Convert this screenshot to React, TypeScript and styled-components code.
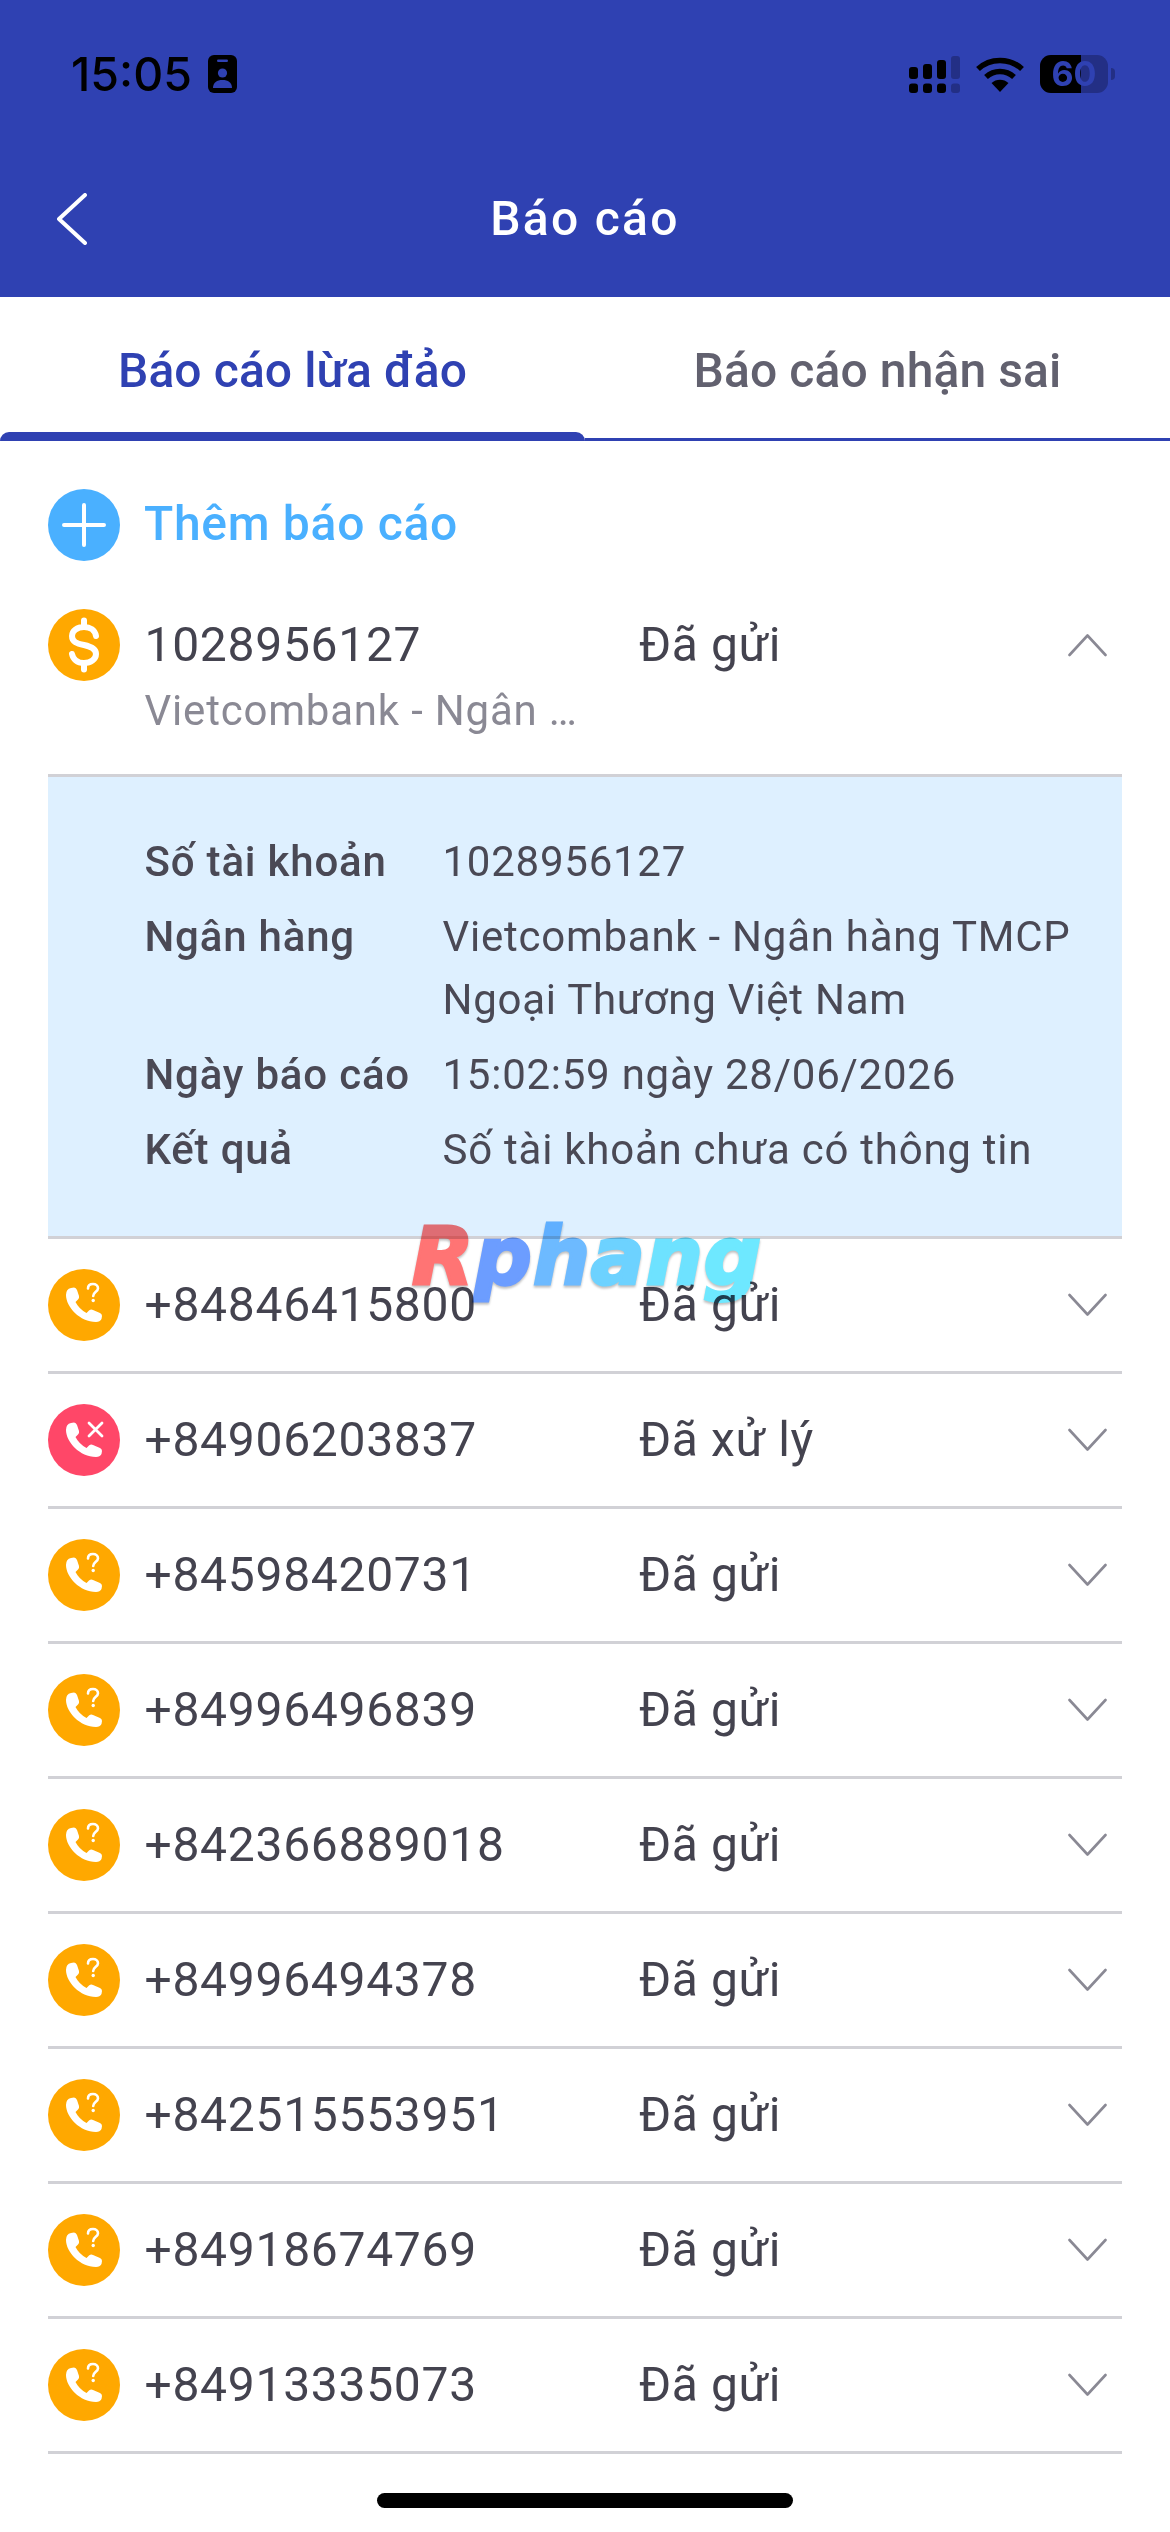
import React from "react";
import styled, { createGlobalStyle } from "styled-components";

const Global = createGlobalStyle`
  html, body { margin: 0; padding: 0; background: #fff; }
  body { font-family: Roboto, "Noto Sans", sans-serif; }
  * { box-sizing: border-box; }
`;

const Page = styled.div`
  position: relative;
  width: 1170px;
  height: 2532px;
  overflow: hidden;
  background: #fff;
  display: flex;
  flex-direction: column;
`;

const Header = styled.header`
  height: 297px;
  background: #2f41b2;
  display: flex;
  flex-direction: column;
`;

const StatusBar = styled.div`
  height: 141px;
  padding: 55px 55px 0 71px;
  display: flex;
  align-items: flex-start;
  justify-content: space-between;
`;

const StatusLeft = styled.div`
  display: flex;
  align-items: center;
  gap: 16px;
  height: 38px;
`;

const Time = styled.span`
  font-family: Inter, sans-serif;
  font-size: 46.5px;
  font-weight: 500;
  color: #000;
  line-height: 38px;
`;

const StatusRight = styled.div`
  display: flex;
  align-items: center;
  gap: 16px;
  height: 38px;
`;

const Battery = styled.div`
  position: relative;
  width: 68px;
  height: 38px;
  border-radius: 11px;
  background: #232f85;
  display: flex;
  align-items: center;
  justify-content: center;
`;

const BatteryFill = styled.div`
  position: absolute;
  left: 0;
  top: 0;
  bottom: 0;
  background: #000;
  border-radius: 11px 0 0 11px;
`;

const BatteryText = styled.span`
  position: relative;
  font-family: Inter, sans-serif;
  font-size: 34px;
  font-weight: 700;
  color: #2f41b2;
  line-height: 38px;
`;

const BatteryTip = styled.div`
  width: 4px;
  height: 12px;
  margin-left: -13px;
  background: #232f85;
  border-radius: 0 4px 4px 0;
`;

const NavBar = styled.div`
  flex: 1;
  padding: 0 57px 0;
  display: grid;
  grid-template-columns: 30px 1fr 30px;
  align-items: center;
`;

const Title = styled.h1`
  margin: 0;
  text-align: center;
  font-size: 48px;
  font-weight: 500;
  color: #fff;
  line-height: 60px;
  letter-spacing: 2.3px;
`;

const Tabs = styled.nav`
  display: grid;
  grid-template-columns: 1fr 1fr;
  height: 144px;
`;

const Tab = styled.div`
  display: flex;
  flex-direction: column;
  justify-content: flex-end;
`;

const TabLabel = styled.div<{ $active: boolean }>`
  height: ${(p) => (p.$active ? 135 : 141)}px;
  padding-top: ${(p) => (p.$active ? 12 : 6)}px;
  flex: none;
  display: flex;
  align-items: center;
  justify-content: center;
  font-size: 48px;
  font-weight: 500;
  letter-spacing: 0.1px;
  color: ${(p) => (p.$active ? "#2f41b2" : "#62616f")};
`;

const TabLine = styled.div<{ $active: boolean }>`
  height: ${(p) => (p.$active ? 9 : 3)}px;
  background: #2f41b2;
  border-radius: ${(p) => (p.$active ? "9px 9px 0 0" : "0")};
`;

const Content = styled.main`
  padding: 48px 48px 0;
  display: flex;
  flex-direction: column;
`;

const AddRow = styled.div`
  display: flex;
  align-items: center;
  gap: 24px;
  height: 72px;
  margin-bottom: 48px;
  font-size: 48px;
  font-weight: 500;
  color: #4ab0ff;
  letter-spacing: 0.7px;
`;

const AddLabel = styled.span`
  position: relative;
  top: -2px;
`;

const Row = styled.div<{ $tall?: boolean }>`
  display: grid;
  grid-template-columns: 72px 470px 1fr 39px;
  column-gap: 24.5px;
  align-items: ${(p) => (p.$tall ? "start" : "center")};
  height: ${(p) => (p.$tall ? 168 : 135)}px;
  border-bottom: 3px solid #d1d1d6;
  padding-right: 15px;
`;

const ChevronCell = styled.div<{ $pad?: boolean }>`
  min-width: 0;
  height: ${(p) => (p.$pad ? "72px" : "auto")};
  display: flex;
  align-items: center;
`;

const NumberCol = styled.div`
  min-width: 0;
  padding-top: 2px;
`;

const Primary = styled.div`
  font-size: 48px;
  line-height: 68px;
  color: #44434f;
  letter-spacing: 0.7px;
  white-space: nowrap;
`;

const Secondary = styled.div`
  font-size: 42px;
  line-height: 62px;
  margin-top: 1px;
  color: #8a8994;
  letter-spacing: 0.8px;
  white-space: nowrap;
`;

const Status = styled.div<{ $tall?: boolean }>`
  font-size: 48px;
  line-height: 68px;
  padding-top: ${(p) => (p.$tall ? 2 : 0)}px;
  color: #44434f;
  letter-spacing: 0.6px;
  white-space: nowrap;
`;

const Panel = styled.section`
  background: #def0ff;
  border-bottom: 3px solid #d1d1d6;
  height: 462px;
  padding: 53px 40px 0 96.5px;
  display: grid;
  grid-template-columns: 298px 1fr;
  grid-auto-rows: min-content;
  row-gap: 12px;
`;

const DetailLabel = styled.div`
  font-size: 42px;
  line-height: 63px;
  font-weight: 500;
  letter-spacing: 0.8px;
  color: #4a4955;
`;

const DetailValue = styled.div`
  font-size: 42px;
  line-height: 63px;
  color: #4a4955;
  letter-spacing: 0.75px;
`;

const HomeBar = styled.div`
  width: 416px;
  height: 15px;
  margin: 39px auto 0;
  border-radius: 8px;
  background: #000;
`;

const Watermark = styled.div`
  position: absolute;
  left: 412px;
  top: 1207px;
  font-family: "DejaVu Sans", sans-serif;
  font-size: 80px;
  font-weight: 700;
  font-style: italic;
  line-height: 100px;
  letter-spacing: 1px;
  white-space: nowrap;
  -webkit-text-stroke: 3px currentColor;
  mix-blend-mode: multiply;
  filter: drop-shadow(0 2px 1px rgba(0, 0, 0, 0.25));
`;

const WatermarkLetter = styled.span<{ $color: string }>`
  color: ${(p) => p.$color};
`;

const Dollar = () => (
  <svg width="72" height="72" viewBox="0 0 72 72">
    <circle cx="36" cy="36" r="36" fill="#ffa800" />
    <path
      d="M48 27C47 21 42 18 36 18C29 18 24 22 24 27C24 33 29 34.5 36 36C43 37.5 48 39.5 48 45C48 50 43 54 36 54C29 54 25 50 24 45M36 11.5V18M36 54V60.5"
      fill="none"
      stroke="#fff"
      strokeWidth="6"
      strokeLinecap="round"
    />
  </svg>
);

const Handset = () => (
  <path
    d="M23 19L26 18.5Q28 18.5 29 21L31 27Q31.5 29 30 30.5L27.5 33Q31 40 38.5 44L41 41.5Q43 40 45 41L52 44Q54 45 54 47L53.5 50Q52 53 48 53C32 53 18 38 18 26Q18 20 23 19Z"
    fill="#fff"
  />
);

const PhoneIcon = ({ rejected }: { rejected?: boolean }) => (
  <svg width="72" height="72" viewBox="0 0 72 72">
    <circle cx="36" cy="36" r="36" fill={rejected ? "#ff4768" : "#ffa800"} />
    <Handset />
    {rejected ? (
      <path d="M41 19L54 32M54 19L41 32" stroke="#fff" strokeWidth="2.8" strokeLinecap="round" />
    ) : (
      <>
        <path d="M40 19.5C40 16.5 42.3 15 45 15C47.8 15 50 16.7 50 19.3C50 22.8 45.2 22.8 45.2 27" fill="none" stroke="#fff" strokeWidth="2.6" strokeLinecap="round" />
        <circle cx="45.2" cy="31.5" r="1.7" fill="#fff" />
      </>
    )}
  </svg>
);

const PlusIcon = () => (
  <svg width="72" height="72" viewBox="0 0 72 72">
    <circle cx="36" cy="36" r="36" fill="#4ab0ff" />
    <path d="M16 36H56M36 16V56" stroke="#fff" strokeWidth="4" strokeLinecap="round" />
  </svg>
);

const Chevron = ({ up }: { up?: boolean }) => (
  <svg width="39" height="24" viewBox="0 0 39 24">
    <path d={up ? "M1.5 22L19.5 2.5L37.5 22" : "M1.5 2L19.5 21.5L37.5 2"} fill="none" stroke="#8a8994" strokeWidth="2.6" strokeLinecap="round" strokeLinejoin="round" />
  </svg>
);

const BackIcon = () => (
  <svg width="30" height="52" viewBox="0 0 30 52">
    <path d="M28 2L2 26L28 50" fill="none" stroke="#fff" strokeWidth="4" strokeLinecap="round" strokeLinejoin="round" />
  </svg>
);

const BadgeIcon = () => (
  <svg width="29" height="38" viewBox="0 0 29 38">
    <rect width="29" height="38" rx="6" fill="#000" />
    <rect x="9" y="4.5" width="11" height="2.4" rx="1.2" fill="#2f41b2" />
    <circle cx="14.5" cy="18" r="4.6" fill="#2f41b2" />
    <path d="M5 33C5 27.5 9 25 14.5 25C20 25 24 27.5 24 33Z" fill="#2f41b2" />
  </svg>
);

const SignalIcon = () => (
  <svg width="51" height="37" viewBox="0 0 51 37">
    <g fill="#000">
      <rect x="0" y="27.5" width="9" height="9.5" rx="3" />
      <rect x="14" y="27.5" width="9" height="9.5" rx="3" />
      <rect x="28" y="27.5" width="9" height="9.5" rx="3" />
      <rect x="0" y="11" width="9" height="12" rx="3" />
      <rect x="14" y="8" width="9" height="15" rx="3" />
      <rect x="28" y="4" width="9" height="19" rx="3" />
    </g>
    <g fill="#232f85">
      <rect x="42" y="0" width="9" height="23" rx="3" />
      <rect x="42" y="27.5" width="9" height="9.5" rx="3" />
    </g>
  </svg>
);

const WifiIcon = () => (
  <svg width="48" height="36" viewBox="0 0 48 36">
    <g fill="none" stroke="#000" strokeWidth="5.5">
      <path d="M2 13C14 1.5 34 1.5 46 13" />
      <path d="M10 21C18 13.5 30 13.5 38 21" />
    </g>
    <path d="M15.5 27C20 22.5 28 22.5 32.5 27L24 36Z" fill="#000" />
  </svg>
);

type Item = { number: string; status: string; rejected?: boolean };

const items: Item[] = [
  { number: "+84846415800", status: "Đã gửi" },
  { number: "+84906203837", status: "Đã xử lý", rejected: true },
  { number: "+84598420731", status: "Đã gửi" },
  { number: "+84996496839", status: "Đã gửi" },
  { number: "+842366889018", status: "Đã gửi" },
  { number: "+84996494378", status: "Đã gửi" },
  { number: "+842515553951", status: "Đã gửi" },
  { number: "+84918674769", status: "Đã gửi" },
  { number: "+84913335073", status: "Đã gửi" },
];

const details: [string, string][] = [
  ["Số tài khoản", "1028956127"],
  ["Ngân hàng", "Vietcombank - Ngân hàng TMCP Ngoại Thương Việt Nam"],
  ["Ngày báo cáo", "15:02:59 ngày 28/06/2026"],
  ["Kết quả", "Số tài khoản chưa có thông tin"],
];

const watermark: [string, string][] = [
  ["R", "#ff7474"],
  ["p", "#6c9dff"],
  ["h", "#6dbaff"],
  ["a", "#6dd2ff"],
  ["n", "#6ee2ff"],
  ["g", "#6ee8ff"],
];

export default function App() {
  return (
    <Page>
      <Global />
      <Header>
        <StatusBar>
          <StatusLeft>
            <Time>15:05</Time>
            <BadgeIcon />
          </StatusLeft>
          <StatusRight>
            <SignalIcon />
            <WifiIcon />
            <Battery>
              <BatteryFill style={{ width: "60%" }} />
              <BatteryText>60</BatteryText>
            </Battery>
            <BatteryTip />
          </StatusRight>
        </StatusBar>
        <NavBar>
          <BackIcon />
          <Title>Báo cáo</Title>
        </NavBar>
      </Header>
      <Tabs>
        <Tab>
          <TabLabel $active>Báo cáo lừa đảo</TabLabel>
          <TabLine $active />
        </Tab>
        <Tab>
          <TabLabel $active={false}>Báo cáo nhận sai</TabLabel>
          <TabLine $active={false} />
        </Tab>
      </Tabs>
      <Content>
        <AddRow>
          <PlusIcon />
          <AddLabel>Thêm báo cáo</AddLabel>
        </AddRow>
        <Row $tall>
          <Dollar />
          <NumberCol>
            <Primary>1028956127</Primary>
            <Secondary>Vietcombank - Ngân …</Secondary>
          </NumberCol>
          <Status $tall>Đã gửi</Status>
          <ChevronCell $pad>
            <Chevron up />
          </ChevronCell>
        </Row>
        <Panel>
          {details.map(([label, value]) => (
            <React.Fragment key={label}>
              <DetailLabel>{label}</DetailLabel>
              <DetailValue>{value}</DetailValue>
            </React.Fragment>
          ))}
        </Panel>
        {items.map((item) => (
          <Row key={item.number}>
            <PhoneIcon rejected={item.rejected} />
            <Primary>{item.number}</Primary>
            <Status>{item.status}</Status>
            <ChevronCell>
              <Chevron />
            </ChevronCell>
          </Row>
        ))}
      </Content>
      <HomeBar />
      <Watermark>
        {watermark.map(([letter, color]) => (
          <WatermarkLetter key={letter} $color={color}>
            {letter}
          </WatermarkLetter>
        ))}
      </Watermark>
    </Page>
  );
}
